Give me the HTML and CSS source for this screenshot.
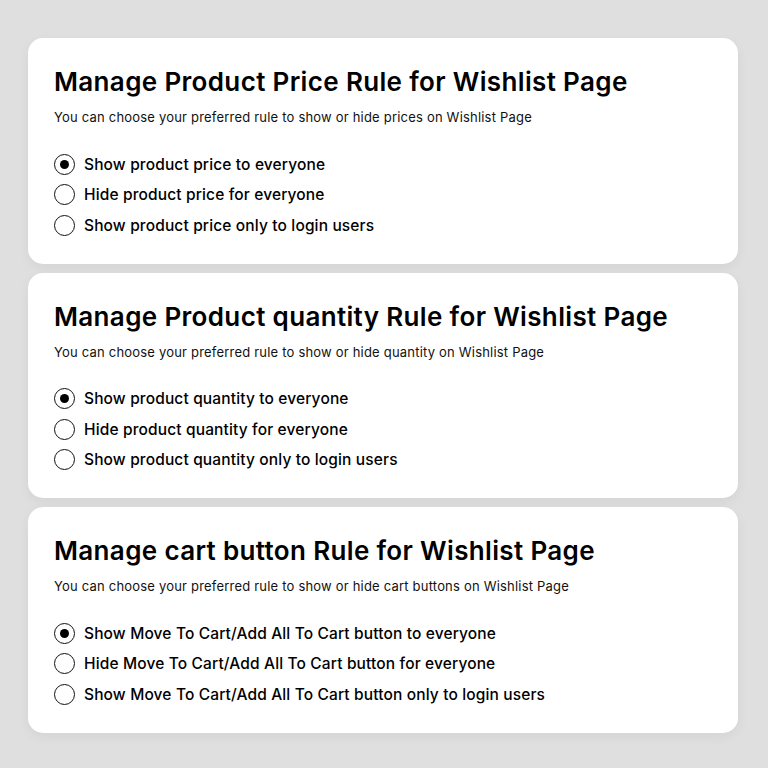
FILE: index.html
```html
<!DOCTYPE html>
<html lang="en">
<head>
    <meta charset="UTF-8">
    <meta name="viewport" content="width=device-width, initial-scale=1.0">
    <title>Wishlist Page Rules</title>
    <link rel="stylesheet" href="styles.css">
</head>
<body>
    <div class="rules">
        <div class="card">
            <h2>Manage Product Price Rule for Wishlist Page</h2>
            <p class="hint">You can choose your preferred rule to show or hide prices on Wishlist Page</p>
            <div class="options">
                <label class="option"><input type="radio" name="price" checked><span class="dot"></span>Show product price to everyone</label>
                <label class="option"><input type="radio" name="price"><span class="dot"></span>Hide product price for everyone</label>
                <label class="option"><input type="radio" name="price"><span class="dot"></span>Show product price only to login users</label>
            </div>
        </div>

        <div class="card">
            <h2>Manage Product quantity Rule for Wishlist Page</h2>
            <p class="hint">You can choose your preferred rule to show or hide quantity on Wishlist Page</p>
            <div class="options">
                <label class="option"><input type="radio" name="qty" checked><span class="dot"></span>Show product quantity to everyone</label>
                <label class="option"><input type="radio" name="qty"><span class="dot"></span>Hide product quantity for everyone</label>
                <label class="option"><input type="radio" name="qty"><span class="dot"></span>Show product quantity only to login users</label>
            </div>
        </div>

        <div class="card">
            <h2>Manage cart button Rule for Wishlist Page</h2>
            <p class="hint">You can choose your preferred rule to show or hide cart buttons on Wishlist Page</p>
            <div class="options">
                <label class="option"><input type="radio" name="cart" checked><span class="dot"></span>Show Move To Cart/Add All To Cart button to everyone</label>
                <label class="option"><input type="radio" name="cart"><span class="dot"></span>Hide Move To Cart/Add All To Cart button for everyone</label>
                <label class="option"><input type="radio" name="cart"><span class="dot"></span>Show Move To Cart/Add All To Cart button only to login users</label>
            </div>
        </div>
    </div>
</body>
</html>
```

FILE: styles.css
```css
body {
    margin: 0;
    background-color: #dfdfdf;
    font-family: Inter, "Noto Sans", sans-serif;
    color: #000;
}
.rules {
    display: flex;
    flex-direction: column;
    gap: 9px;
    padding: 38px 30px 38px 28px;
}
.card {
    background-color: #fff;
    border-radius: 15px;
    padding: 24px 26px 23px;
    box-shadow: 0 4px 12px rgba(0, 0, 0, 0.05);
}
.card h2 {
    margin: 0;
    font-size: 26px;
    line-height: 40px;
    font-weight: 600;
    letter-spacing: 0.35px;
}
.hint {
    margin: 5px 0 0;
    font-size: 13px;
    line-height: 20px;
    letter-spacing: 0.2px;
    color: #111;
}
.options {
    display: flex;
    flex-direction: column;
    margin-top: 22px;
}
.option {
    display: flex;
    align-items: center;
    gap: 9px;
    height: 30.5px;
    font-size: 15.5px;
    font-weight: 500;
    letter-spacing: 0.14px;
    cursor: pointer;
}
.option input {
    display: none;
}
.dot {
    box-sizing: border-box;
    width: 21px;
    height: 21px;
    border: 1.5px solid #111;
    border-radius: 50%;
    display: flex;
    align-items: center;
    justify-content: center;
}
.option input:checked + .dot::after {
    content: "";
    width: 9px;
    height: 9px;
    border-radius: 50%;
    background-color: #000;
}
```
